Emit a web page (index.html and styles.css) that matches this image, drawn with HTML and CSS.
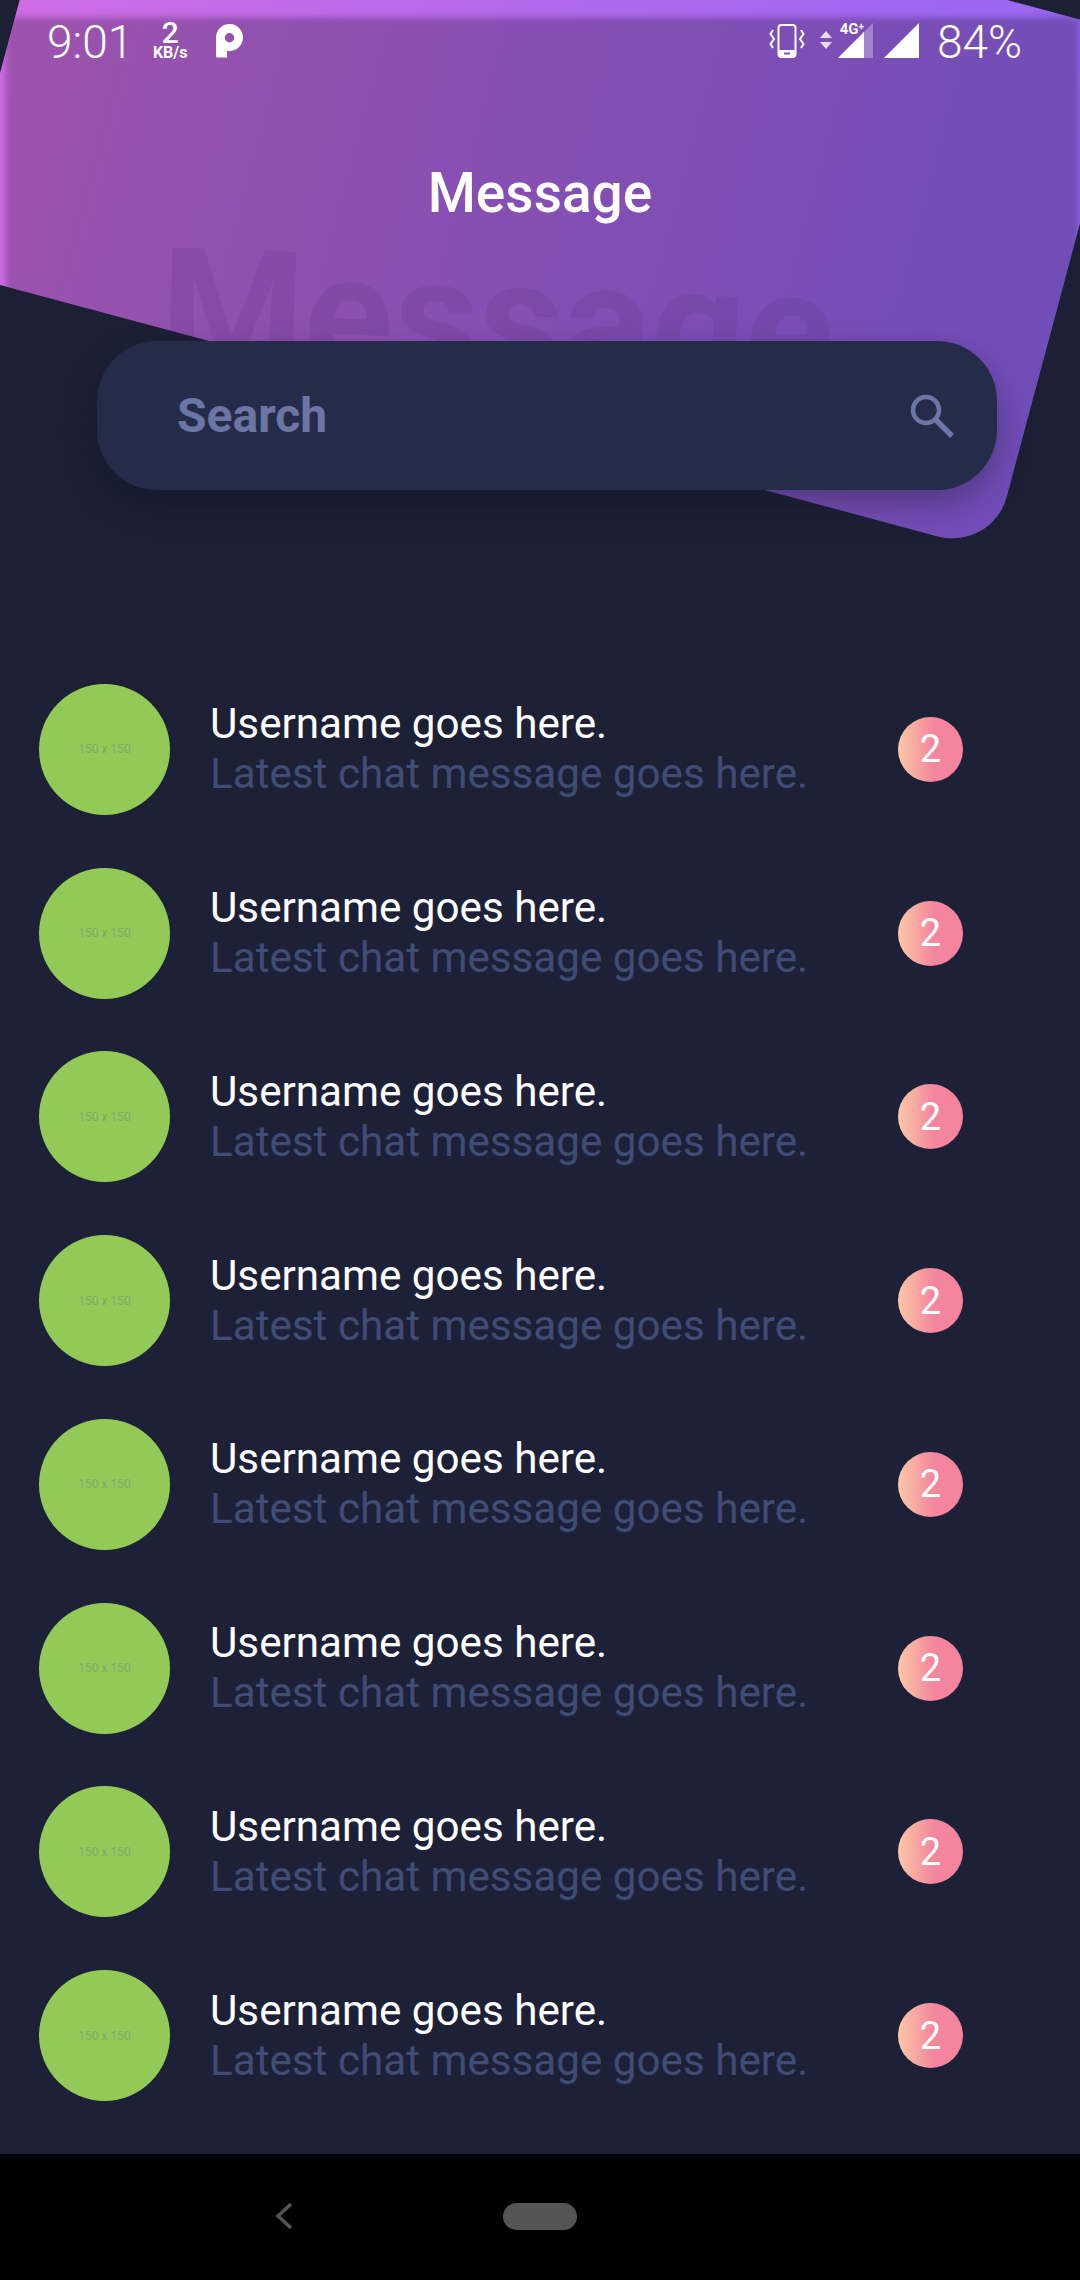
FILE: index.html
```html
<!DOCTYPE html>
<html lang="en">
<head>
<meta charset="utf-8">
<title>Message</title>
<link rel="stylesheet" href="styles.css">
</head>
<body>
<div class="app">
  <div class="hero-shape"><div class="hero-shade"></div></div>
  <div class="watermark">Message</div>

  <div class="statusbar">
    <div class="status-left">
      <span class="clock">9:01</span>
      <span class="speed"><b>2</b><i>KB/s</i></span>
      <svg class="p-icon" width="27" height="34" viewBox="0 0 27 34"><path fill="#fff" fill-rule="evenodd" d="M0 14C0 6 6 0 13.500 0S27 6 27 13.500 21 27 13.500 27H11V33.500H1.500Q0 33.500 0 32ZM13.500 9A4.700 4.700 0 1 0 13.500 18.400A4.700 4.700 0 1 0 13.500 9Z"/></svg>
    </div>
    <div class="status-right">
      <svg class="vib" width="36" height="34" viewBox="0 0 36 34"><rect x="9.500" y="1" width="17" height="32" rx="3" fill="none" stroke="#fff" stroke-width="2"/><rect x="9.500" y="26" width="17" height="7" rx="2" fill="#fff"/><rect x="15" y="28.500" width="6" height="2" fill="#7f52b4"/><path d="M4 6 L1.500 10 L5 15 L1.500 20 L4 24 M32 6 L34.500 10 L31 15 L34.500 20 L32 24" fill="none" stroke="#fff" stroke-width="2"/></svg>
      <span class="net">
        <svg class="net-arrows" width="14" height="18" viewBox="0 0 14 18"><path d="M7 0 13 7H1Z M7 18 13 11H1Z" fill="#fff" fill-opacity=".8"/></svg>
        <svg width="35" height="35" viewBox="0 0 35 35"><path d="M0 35 35 0V35Z" fill="#fff" fill-opacity=".3"/><path d="M0 35 26 9V35Z" fill="#fff"/></svg>
        <span class="net-label">4G<sup>+</sup></span>
      </span>
      <svg width="35" height="35" viewBox="0 0 35 35"><path d="M0 35 35 0V35Z" fill="#fff"/></svg>
      <span class="battery">84%</span>
    </div>
  </div>

  <h1 class="title">Message</h1>

  <div class="search">
    <span class="search-label">Search</span>
    <svg class="search-icon" width="48" height="48" viewBox="0 0 48 48"><circle cx="18" cy="18" r="13" fill="none" stroke="#6b76a4" stroke-width="4.500"/><path d="M27.500 27.500 44 44" stroke="#6b76a4" stroke-width="5.500" fill="none"/></svg>
  </div>

  <ul class="list">
    <li class="row"><div class="avatar">150 x 150</div><div class="texts"><div class="name">Username goes here.</div><div class="msg">Latest chat message goes here.</div></div><div class="badge">2</div></li>
    <li class="row"><div class="avatar">150 x 150</div><div class="texts"><div class="name">Username goes here.</div><div class="msg">Latest chat message goes here.</div></div><div class="badge">2</div></li>
    <li class="row"><div class="avatar">150 x 150</div><div class="texts"><div class="name">Username goes here.</div><div class="msg">Latest chat message goes here.</div></div><div class="badge">2</div></li>
    <li class="row"><div class="avatar">150 x 150</div><div class="texts"><div class="name">Username goes here.</div><div class="msg">Latest chat message goes here.</div></div><div class="badge">2</div></li>
    <li class="row"><div class="avatar">150 x 150</div><div class="texts"><div class="name">Username goes here.</div><div class="msg">Latest chat message goes here.</div></div><div class="badge">2</div></li>
    <li class="row"><div class="avatar">150 x 150</div><div class="texts"><div class="name">Username goes here.</div><div class="msg">Latest chat message goes here.</div></div><div class="badge">2</div></li>
    <li class="row"><div class="avatar">150 x 150</div><div class="texts"><div class="name">Username goes here.</div><div class="msg">Latest chat message goes here.</div></div><div class="badge">2</div></li>
    <li class="row"><div class="avatar">150 x 150</div><div class="texts"><div class="name">Username goes here.</div><div class="msg">Latest chat message goes here.</div></div><div class="badge">2</div></li>
  </ul>

  <div class="navbar">
    <svg class="nav-back" width="20" height="28" viewBox="0 0 20 28"><path d="M17 2 4 14 17 26" fill="none" stroke="#555" stroke-width="3.500"/></svg>
    <div class="nav-home"></div>
  </div>
</div>
</body>
</html>
```
FILE: styles.css
```css
* { box-sizing: border-box; }
html, body { margin: 0; padding: 0; }
body { background: #1d2137; font-family: Roboto, "Liberation Sans", sans-serif; color: #fff; }

.app {
  position: relative;
  width: 1080px;
  height: 2280px;
  overflow: hidden;
  display: flex;
  flex-direction: column;
  background: linear-gradient(180deg, #1b2034 0, #1b2034 560px, #1d2137 900px);
}

/* decorative tilted header panel */
.hero-shape {
  position: absolute;
  left: -2px;
  top: -116px;
  width: 1082px;
  height: 536px;
  border-radius: 56px;
  overflow: hidden;
  transform: rotate(15deg);
  background: linear-gradient(90deg, #cf6de4 0%, #b068ec 50%, #9566f2 100%);
}
.hero-shade {
  position: absolute;
  left: -9px;
  top: 276px;
  width: 1073px;
  height: 900px;
  background: rgba(0, 0, 0, .24);
  filter: blur(3px);
  transform-origin: 0 0;
  transform: rotate(-15deg);
}
.watermark {
  position: absolute;
  left: 160px;
  top: 226px;
  font-size: 165px;
  line-height: 187px;
  font-weight: 700;
  color: rgba(60, 30, 90, .1);
  transform: rotate(2deg);
  white-space: nowrap;
}

.statusbar {
  position: relative;
  height: 80px;
  flex: none;
  display: flex;
  justify-content: space-between;
  align-items: flex-start;
  padding: 20px 58px 0 47px;
}
.status-left, .status-right { display: flex; align-items: flex-start; }
.clock, .battery { font-size: 46px; line-height: 42px; font-weight: 300; margin-top: 1px; }
.speed { display: flex; flex-direction: column; align-items: center; margin-left: 17px; width: 40px; }
.speed b { font-size: 30px; line-height: 26px; font-weight: 500; }
.speed i { font-size: 16px; line-height: 14px; font-weight: 700; font-style: normal; }
.p-icon { margin: 4px 0 0 26px; }
.status-right svg { flex: none; }
.vib { margin: 4px 14px 0 0; }
.net { position: relative; display: flex; align-items: flex-end; height: 35px; margin: 3px 11px 0 0; gap: 5px; }
.net-arrows { margin-bottom: 9px; }
.net-label {
  position: absolute;
  right: 9px;
  top: -2px;
  font-size: 15px;
  line-height: 16px;
  font-weight: 700;
}
.net-label sup { font-size: 10px; line-height: 0; vertical-align: 4px; }
.status-right > svg:nth-child(3) { margin-top: 3px; }
.battery { margin-left: 18px; }

.title {
  position: relative;
  margin: 80px 0 0;
  height: 66px;
  text-align: center;
  font-size: 55px;
  line-height: 66px;
  font-weight: 500;
}

.search {
  position: relative;
  flex: none;
  margin: 115px 83px 0 97px;
  height: 149px;
  border-radius: 60px;
  background: #252c4a;
  box-shadow: 0 14px 32px rgba(17, 18, 38, .35);
  display: flex;
  align-items: center;
  justify-content: space-between;
  padding: 0 41px 0 80px;
}
.search-label { font-size: 48px; font-weight: 700; color: #6b76a4; }

.list { position: relative; list-style: none; margin: 167.500px 0 0; padding: 0; }
.row {
  display: flex;
  align-items: center;
  height: 183.750px;
  padding-left: 39px;
}
.avatar {
  flex: none;
  width: 131px;
  height: 131px;
  border-radius: 50%;
  background: #93c956;
  color: #83a86e;
  font-size: 12px;
  display: flex;
  align-items: center;
  justify-content: center;
}
.texts { margin-left: 40px; width: 688px; }
.name { font-size: 42.200px; line-height: 50px; color: #fff; }
.msg { font-size: 42.200px; line-height: 50px; color: #404c74; }
.badge {
  flex: none;
  width: 65px;
  height: 65px;
  border-radius: 50%;
  background: linear-gradient(90deg, #fac9a5 0%, #f4869e 55%, #f4829e 100%);
  font-size: 38px;
  display: flex;
  align-items: center;
  justify-content: center;
}

.navbar {
  position: absolute;
  left: 0;
  right: 0;
  bottom: 0;
  height: 126px;
  background: #000;
  display: flex;
  align-items: center;
  padding: 0 0 0 274px;
}
.nav-back { margin-top: -2px; }
.nav-home { width: 74px; height: 27px; border-radius: 14px; background: #555; margin: -2px 0 0 209px; }
```
